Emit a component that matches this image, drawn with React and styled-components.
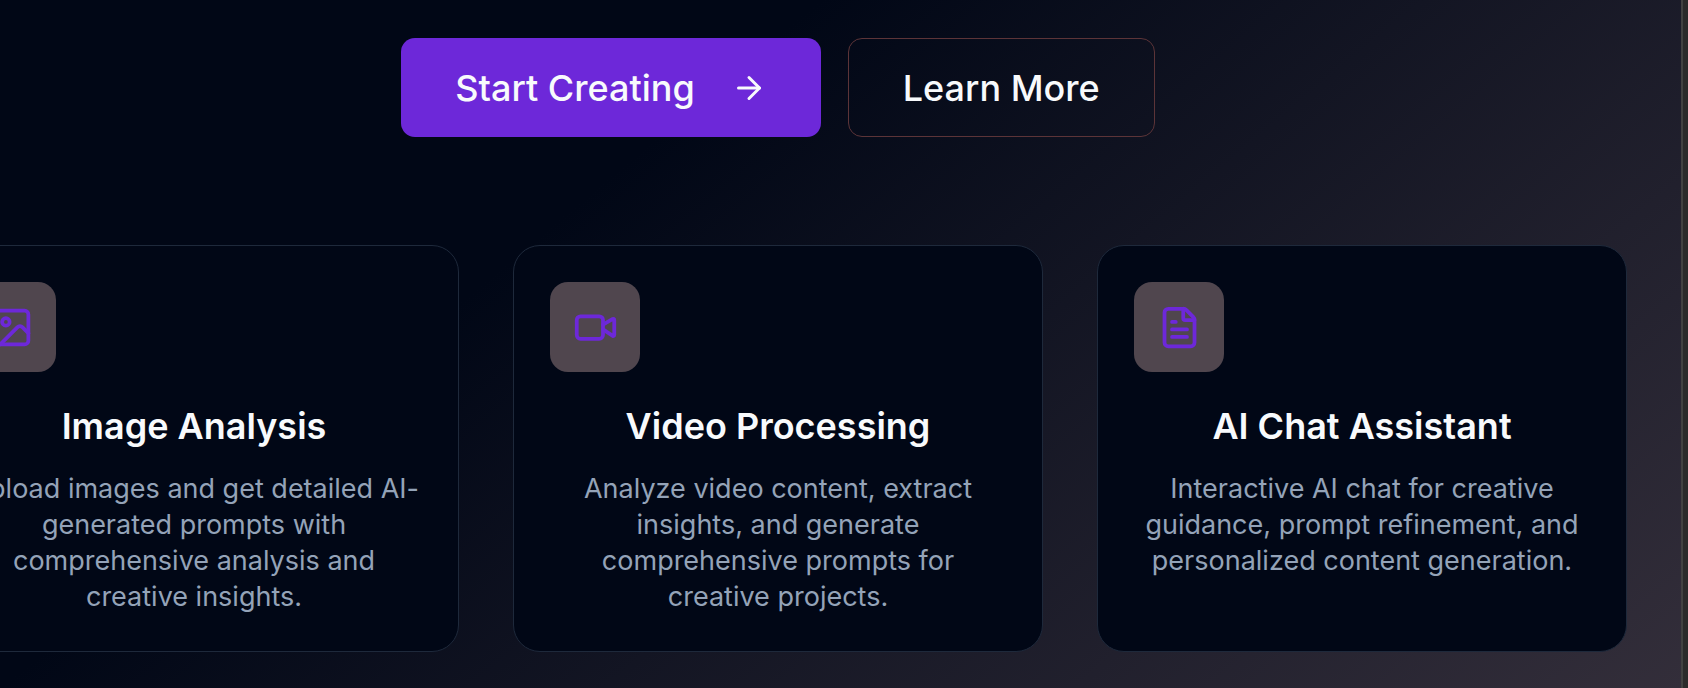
import React from "react";
import styled, { createGlobalStyle } from "styled-components";
import { ArrowRight, FileText, Image, Video } from "lucide-react";

const GlobalStyle = createGlobalStyle`
  *, *::before, *::after { box-sizing: border-box; }
  body {
    margin: 0;
    background: #2b2b2b;
    color: #f8fafc;
    font-family: Inter, "Liberation Sans", sans-serif;
    -webkit-font-smoothing: antialiased;
  }
`;

const Window = styled.div`
  min-height: 100vh;
  margin-right: 5px;
  border-right: 2px solid #424242;
  overflow: hidden;
`;

const Hero = styled.main`
  min-height: 100vh;
  margin-left: -125px;
  padding: 38px 54px 36px;
  display: flex;
  flex-direction: column;
  gap: 108px;
  background: linear-gradient(140deg, #010716 36%, #332e3a 100%);
`;

const Actions = styled.div`
  display: flex;
  justify-content: center;
  gap: 27px;
`;

const Button = styled.button`
  display: inline-flex;
  align-items: center;
  gap: 36px;
  height: 99px;
  padding: 0 54px;
  border: ${(p) => (p.$primary ? "none" : "1px solid #5c3438")};
  border-radius: 14px;
  background: ${(p) => (p.$primary ? "#6d28d9" : "transparent")};
  color: #f8fafc;
  font: inherit;
  font-size: 36px;
  font-weight: 500;
  line-height: 54px;
  white-space: nowrap;
  cursor: pointer;
`;

const Features = styled.section`
  display: grid;
  grid-template-columns: repeat(3, minmax(0, 1fr));
  gap: 54px;
`;

const Card = styled.article`
  padding: 36px;
  border: 1px solid #1e293b;
  border-radius: 27px;
  background: #010716;
  text-align: center;
`;

const IconTile = styled.div`
  display: flex;
  align-items: center;
  justify-content: center;
  width: 90px;
  height: 90px;
  margin-bottom: 36px;
  border-radius: 18px;
  background: #50464e;
  color: #6d28d9;
`;

const Title = styled.h3`
  margin: 0 0 27px;
  font-size: 36px;
  font-weight: 600;
  line-height: 36px;
`;

const Description = styled.p`
  margin: 0;
  color: #94a3b8;
  font-size: 27px;
  line-height: 36px;
`;

const features = [
  {
    icon: Image,
    title: "Image Analysis",
    text: "Upload images and get detailed AI-generated prompts with comprehensive analysis and creative insights.",
  },
  {
    icon: Video,
    title: "Video Processing",
    text: "Analyze video content, extract insights, and generate comprehensive prompts for creative projects.",
  },
  {
    icon: FileText,
    title: "AI Chat Assistant",
    text: "Interactive AI chat for creative guidance, prompt refinement, and personalized content generation.",
  },
];

export default function App() {
  return (
    <>
      <GlobalStyle />
      <Window>
        <Hero>
          <Actions>
            <Button type="button" $primary>
              Start Creating
              <ArrowRight size={36} aria-hidden="true" />
            </Button>
            <Button type="button">Learn More</Button>
          </Actions>
          <Features>
            {features.map(({ icon: Icon, title, text }) => (
              <Card key={title}>
                <IconTile>
                  <Icon size={45} aria-hidden="true" />
                </IconTile>
                <Title>{title}</Title>
                <Description>{text}</Description>
              </Card>
            ))}
          </Features>
        </Hero>
      </Window>
    </>
  );
}
